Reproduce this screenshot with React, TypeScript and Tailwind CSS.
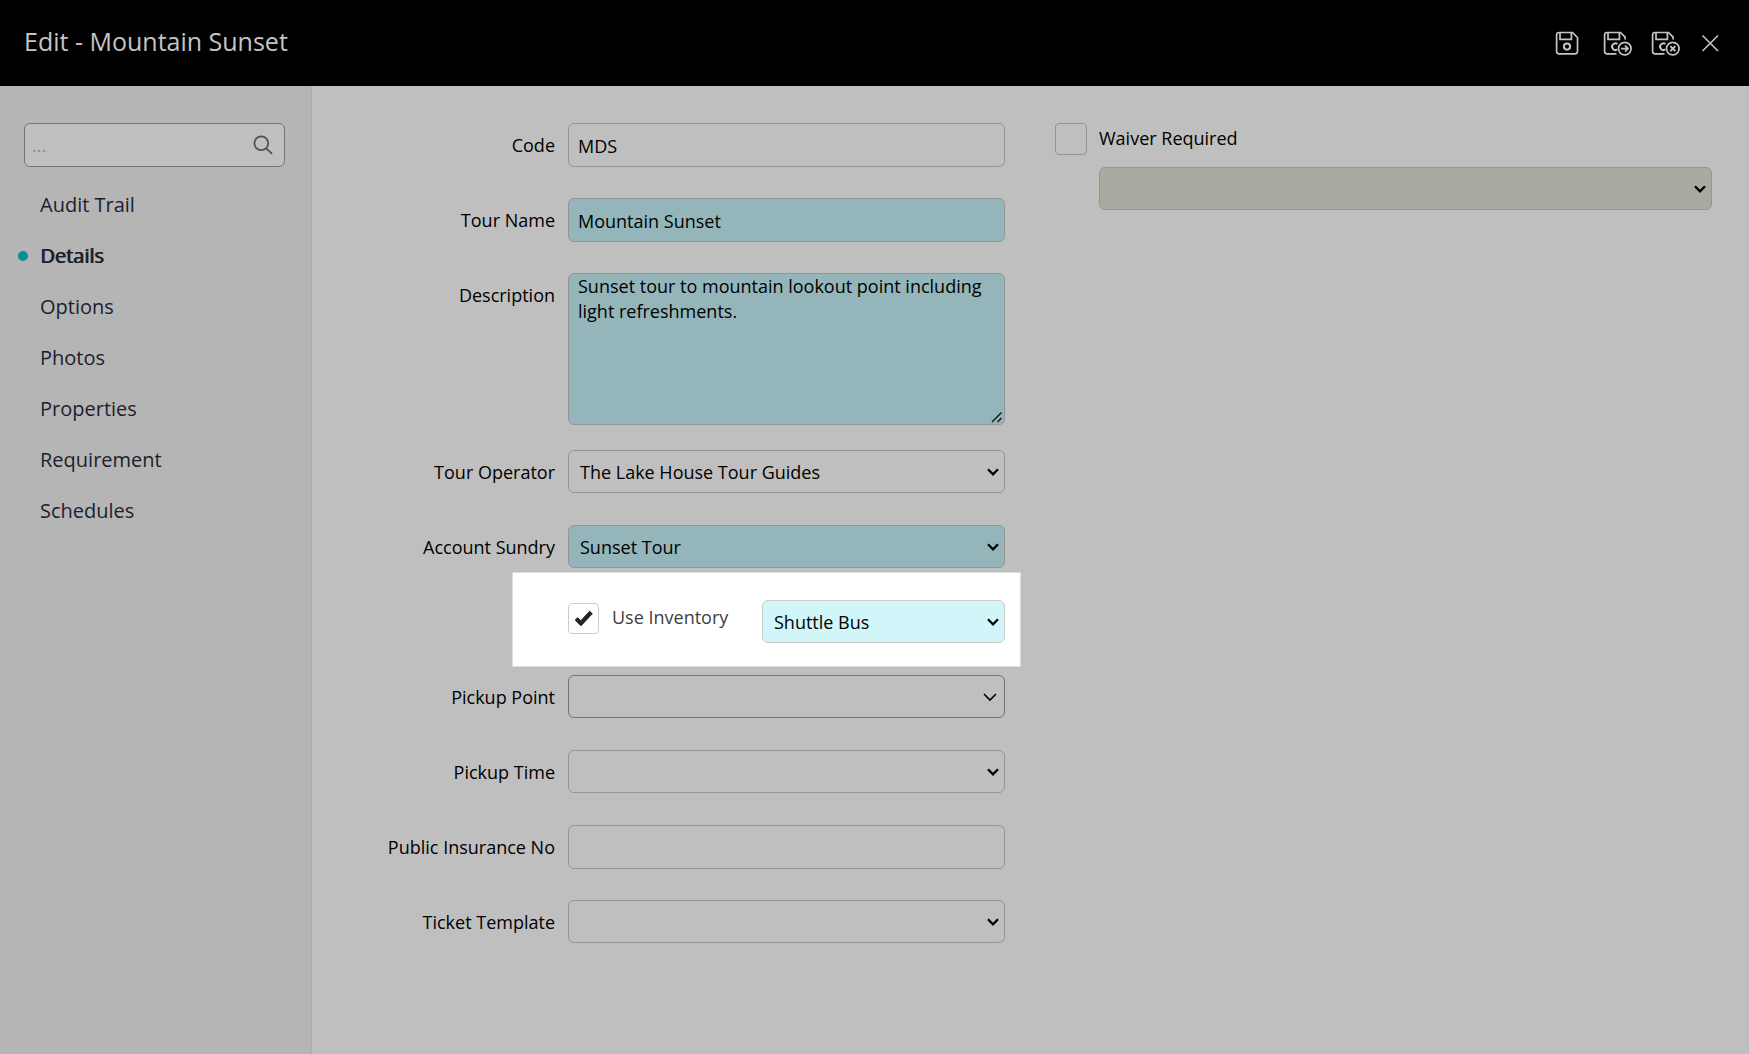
import type { ReactNode } from "react";

const fieldBase = "w-full rounded-md border border-[#959595] text-lg text-black outline-none";

const menu = [
  { name: "Audit Trail" },
  { name: "Details", active: true },
  { name: "Options" },
  { name: "Photos" },
  { name: "Properties" },
  { name: "Requirement" },
  { name: "Schedules" },
];

function Disk({ children }: { children?: ReactNode }) {
  return (
    <svg viewBox="0 0 30 26" className="h-[26px] w-[30px]" fill="none" stroke="#c4c4c4" strokeWidth="1.7" aria-hidden="true">
      {children}
    </svg>
  );
}

function SaveIcon() {
  return (
    <Disk>
      <path d="M4 2.5h13.5l5 5v13.700a2.600 2.600 0 0 1-2.600 2.600H4.200a2.600 2.600 0 0 1-2.600-2.600V5.100A2.600 2.600 0 0 1 4.200 2.500" />
      <path d="M5 2.500v6.800h11.400V2.500" />
      <circle cx="12" cy="16.600" r="3.100" strokeWidth="2" />
    </Disk>
  );
}

function SaveBadge({ children }: { children: ReactNode }) {
  return (
    <Disk>
      <path d="M13.500 23.800H4.200a2.600 2.600 0 0 1-2.600-2.600V5.100a2.600 2.600 0 0 1 2.600-2.600h13.300l4.600 4.600v2.400" />
      <path d="M5 2.500v6.800h11.400V2.500" />
      <path d="M14.400 14a3.300 3.300 0 1 0 0 5.300" strokeWidth="2" />
      <circle cx="21.800" cy="18.600" r="6.300" />
      {children}
    </Disk>
  );
}

function Chevron({ thin = false }: { thin?: boolean }) {
  return (
    <svg
      viewBox="0 0 14 10"
      className={`pointer-events-none absolute top-1/2 h-[10px] w-[14px] -translate-y-1/2 ${thin ? "right-[8px]" : "right-[5px]"}`}
      fill="none"
      stroke="#000"
      strokeWidth={thin ? 1.6 : 2.3}
      aria-hidden="true"
    >
      <path d={thin ? "M1 2l6 6 6-6" : "M2 2.300l5 5 5-5"} />
    </svg>
  );
}

function Select({ id, label, value = "", tone = "border-[#959595]", thin }: { id: string; label?: string; value?: string; tone?: string; thin?: boolean }) {
  return (
    <div className="relative w-full">
      <select
        id={id}
        aria-label={label}
        defaultValue={value}
        className={`block h-[43px] w-full appearance-none rounded-md border pr-8 pl-[11px] text-lg text-black outline-none ${tone}`}
      >
        <option>{value}</option>
      </select>
      <Chevron thin={thin} />
    </div>
  );
}

function Row({ id, label, height = "h-[75px]", children }: { id: string; label: string; height?: string; children: ReactNode }) {
  return (
    <div className={`flex items-start gap-[13px] ${height}`}>
      <label htmlFor={id} className="w-[243px] shrink-0 text-right text-lg leading-[44px] text-black">
        {label}
      </label>
      <div className="min-w-0 flex-1">{children}</div>
    </div>
  );
}

export default function App() {
  return (
    <div className="flex min-h-screen flex-col bg-[#bfbfbf] font-['Open_Sans',sans-serif]">
      <header className="flex h-[86px] items-center justify-between bg-black pr-7 pl-6">
        <h1 className="pb-1 text-[25px] leading-[34px] text-[#c4c4c4]">Edit - Mountain Sunset</h1>
        <div className="flex items-center gap-[18px]">
          <button type="button" aria-label="Save">
            <SaveIcon />
          </button>
          <button type="button" aria-label="Save and continue">
            <SaveBadge>
              <path d="M18 18.600h7M22 15.600l3 3-3 3" />
            </SaveBadge>
          </button>
          <button type="button" aria-label="Save and close">
            <SaveBadge>
              <path d="M19.300 16.100l5 5M24.300 16.100l-5 5" strokeWidth="2" />
            </SaveBadge>
          </button>
          <button type="button" aria-label="Close">
            <svg viewBox="0 0 22 22" className="size-[22px]" fill="none" stroke="#c4c4c4" strokeWidth="1.6" aria-hidden="true">
              <path d="M3.500 3.500l15.500 15.500M19 3.500L3.500 19" />
            </svg>
          </button>
        </div>
      </header>

      <div className="flex flex-1">
        <aside className="w-[312px] shrink-0 border-r border-[#adadad] bg-[#b5b5b5] pt-[37px]">
          <div className="relative mr-[26px] ml-6">
            <input
              type="search"
              aria-label="Search sections"
              placeholder="..."
              className="block h-[44px] w-full rounded-md border border-[#757575] bg-[#bfbfbf] pr-11 pl-[7px] text-lg outline-none placeholder:text-[#8c8c8c]"
            />
            <svg viewBox="0 0 20 20" className="absolute top-3 right-3 size-5" fill="none" stroke="#505050" strokeWidth="1.8" aria-hidden="true">
              <circle cx="8.300" cy="8.300" r="6.900" />
              <path d="M13.300 13.300l5.700 5.500" />
            </svg>
          </div>
          <nav className="mt-3">
            {menu.map((item) => (
              <a key={item.name} href="#" className="flex h-[51px] items-center pl-[18px] text-xl text-[#1c1e2c]">
                <span className={`mr-3 size-[10px] rounded-full ${item.active ? "bg-[#068f99]" : ""}`} />
                <span className={item.active ? "[text-shadow:1px_0_0_currentColor]" : ""}>{item.name}</span>
              </a>
            ))}
          </nav>
        </aside>

        <main className="grid flex-1 grid-cols-[minmax(0,693fr)_minmax(0,657fr)] items-start gap-[50px] pt-[37px] pr-[37px]">
          <form>
            <Row id="code" label="Code">
              <input id="code" defaultValue="MDS" className={`${fieldBase} block h-[44px] px-[9px] pt-0.5`} />
            </Row>
            <Row id="tour-name" label="Tour Name">
              <input id="tour-name" defaultValue="Mountain Sunset" className={`${fieldBase} block h-[44px] bg-[#94b6ba] px-[9px] pt-0.5`} />
            </Row>
            <Row id="description" label="Description" height="h-[177px]">
              <div className="relative">
                <textarea
                  id="description"
                  defaultValue="Sunset tour to mountain lookout point including light refreshments."
                  className={`${fieldBase} block h-[152px] bg-[#94b6ba] px-[9px] leading-[25px] [&::-webkit-resizer]:bg-transparent`}
                />
                <svg viewBox="0 0 12 12" className="pointer-events-none absolute right-0.5 bottom-0.5 size-3" fill="none" stroke="#111" strokeWidth="1.4" aria-hidden="true">
                  <path d="M1 11L10.500 1.500M6.500 11l4-4" />
                </svg>
              </div>
            </Row>
            <Row id="operator" label="Tour Operator">
              <Select id="operator" value="The Lake House Tour Guides" />
            </Row>
            <Row id="sundry" label="Account Sundry" height="h-[47px]">
              <Select id="sundry" value="Sunset Tour" tone="border-[#959595] bg-[#94b6ba]" />
            </Row>
            <div className="mr-[-16px] mb-2 ml-[200px] flex h-[95px] items-start border border-[#dcdcdc] bg-white pt-[27px] pr-[15px] pl-[55px]">
              <label className="flex flex-1 items-center gap-[13px] pt-[3px] text-lg leading-[31px] text-[#404040]">
                <span className="relative size-[31px] shrink-0">
                  <input type="checkbox" defaultChecked className="block size-[31px] appearance-none rounded border border-[#ccc] bg-white" />
                  <svg
                    viewBox="0 0 31 31"
                    className="pointer-events-none absolute inset-0 size-[31px]"
                    fill="#212529"
                    stroke="#212529"
                    strokeLinejoin="round"
                    aria-hidden="true"
                  >
                    <path d="M7.200 17l2.500-2.300 3.200 3 8.700-9.500 2.700 2.500-11.300 12.100z" />
                  </svg>
                </span>
                <span className="h-[31px] leading-[29px]">Use Inventory</span>
              </label>
              <div className="w-[243px]">
                <Select id="inventory" label="Inventory item" value="Shuttle Bus" tone="border-[#ccc] bg-[#d1f6fa]" />
              </div>
            </div>
            <Row id="pickup-point" label="Pickup Point">
              <Select id="pickup-point" tone="border-[#757575]" thin />
            </Row>
            <Row id="pickup-time" label="Pickup Time">
              <Select id="pickup-time" />
            </Row>
            <Row id="insurance" label="Public Insurance No">
              <input id="insurance" className={`${fieldBase} block h-[44px] px-[9px]`} />
            </Row>
            <Row id="ticket" label="Ticket Template">
              <Select id="ticket" />
            </Row>
          </form>

          <section className="flex flex-col gap-3">
            <label className="flex items-start gap-3 text-lg leading-[30px] text-black">
              <input type="checkbox" className="size-8 appearance-none rounded border border-[#959595]" />
              Waiver Required
            </label>
            <div className="pl-11">
              <Select id="waiver" label="Waiver" tone="border-[#959595] bg-[#aaaaa0]" />
            </div>
          </section>
        </main>
      </div>
    </div>
  );
}
